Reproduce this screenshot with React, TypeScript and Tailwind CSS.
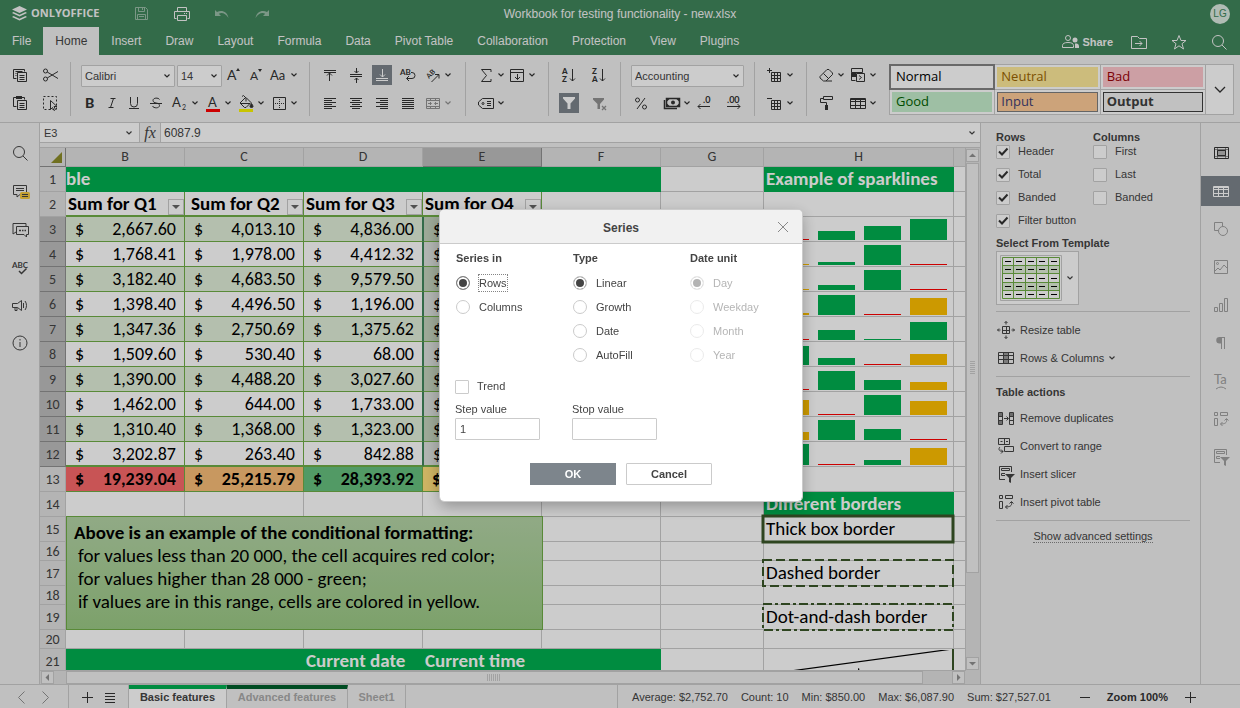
import { useState, type ReactNode } from "react";
import clsx from "clsx";

function Icon({ children, w = 20, h = 20, className }: { children: ReactNode; w?: number; h?: number; className?: string }) {
  return (
    <svg
      width={w}
      height={h}
      viewBox={`0 0 ${w} ${h}`}
      fill="none"
      stroke="currentColor"
      aria-hidden="true"
      className={clsx("shrink-0", className)}
    >
      {children}
    </svg>
  );
}

function Chevron({ className }: { className?: string }) {
  return (
    <Icon w={8} h={8} className={className}>
      <path d="M1.500 2.500 4 5l2.500-2.500" strokeWidth="1.200" />
    </Icon>
  );
}

const letter = "fill-current stroke-none [font-family:Lato,'Open_Sans',sans-serif]";

const icons = {
  copy: (
    <Icon>
      <path d="M6.500 13.500h-3v-9h11v2M5.500 6.500h7M5.500 8.500h1M5.500 10.500h1M7.500 7.500h9v9h-9zM9.500 10.500h5M9.500 12.500h5M9.500 14.500h5" />
    </Icon>
  ),
  cut: (
    <Icon>
      <circle cx="5.500" cy="6" r="2" />
      <circle cx="5.500" cy="14" r="2" />
      <path d="M7.200 7 18 13.500M7.200 13 18 6.500" />
    </Icon>
  ),
  paste: (
    <Icon>
      <path d="M6.500 13.500h-3v-9h11v2M7.500 7.500h9v9h-9zM9.500 10.500h5M9.500 12.500h5M9.500 14.500h5" />
      <path d="M6 3h6v3H6z" fill="currentColor" stroke="none" />
    </Icon>
  ),
  selectAll: (
    <Icon>
      <path d="M3.500 3.500h13v13h-13z" strokeDasharray="2 2" />
      <path d="M10.500 7.500v9l2-2 1.500 3 1.500-1-1.500-3h3z" fill="#f1f1f1" />
    </Icon>
  ),
  incFont: (
    <Icon>
      <text x="3" y="15" fontSize="14" className={letter}>A</text>
      <path d="m12 6 2-3 2 3z" fill="currentColor" stroke="none" />
    </Icon>
  ),
  decFont: (
    <Icon>
      <text x="4" y="15" fontSize="12" className={letter}>A</text>
      <path d="m12 4 2 3 2-3z" fill="currentColor" stroke="none" />
    </Icon>
  ),
  changeCase: (
    <Icon>
      <text x="1" y="15" fontSize="13" className={letter}>Aa</text>
    </Icon>
  ),
  bold: (
    <Icon>
      <text x="5" y="15" fontSize="14" fontWeight="900" className={letter}>B</text>
    </Icon>
  ),
  italic: (
    <Icon>
      <path d="M8.500 5.500h5M6.500 14.500h5M11.500 5.500l-3 9" />
    </Icon>
  ),
  underline: (
    <Icon>
      <path d="M6.500 4v6.500a3.500 3.500 0 0 0 7 0V4M5 15.500h10" />
    </Icon>
  ),
  strike: (
    <Icon>
      <path d="M13.500 6.500c-1-2-6.500-2-6.500 1 0 3.500 6.500 1.500 6.500 5 0 3-6 3-7 .5M4 10.500h12" />
    </Icon>
  ),
  subscript: (
    <Icon>
      <text x="2" y="14" fontSize="13" className={letter}>A</text>
      <text x="12" y="17" fontSize="7" className={letter}>2</text>
    </Icon>
  ),
  fontColor: (
    <Icon>
      <text x="5" y="14" fontSize="13" className={letter}>A</text>
      <path d="M3 16h14v3H3z" fill="#f00" stroke="none" />
    </Icon>
  ),
  fillColor: (
    <Icon>
      <path d="M9.500 4.500 4 10l4.500 4.500h1.500l5-5-5-5zM4.500 10.500h9.500M6 3.500l1.500-1 2.500 2.500v3.500" />
      <path d="M15.500 10.500q3 4 0 4t0-4z" fill="currentColor" />
      <path d="M3 16h14v3H3z" fill="#fbf500" stroke="none" />
    </Icon>
  ),
  borders: (
    <Icon>
      <path d="M4.500 4.500h12v12h-12z" />
      <path d="M10.500 6v10M6 10.500h10" strokeDasharray="1 1" />
    </Icon>
  ),
  alignTop: (
    <Icon>
      <path d="M4 5.500h12M4 7.500h12M9.500 16V8M7 10.500 9.500 8l2.500 2.500" />
    </Icon>
  ),
  alignMiddle: (
    <Icon>
      <path d="M4 9.500h12M4 11.500h12M10.500 3v5M8.500 6l2 2 2-2M10.500 18v-5M8.500 15l2-2 2 2" />
    </Icon>
  ),
  alignBottom: (
    <Icon>
      <path d="M4 13.500h12M4 15.500h12M10.500 4v8M8 9.500l2.500 2.500 2.500-2.500" />
    </Icon>
  ),
  wrap: (
    <Icon>
      <text x="2" y="10" fontSize="8" fontWeight="700" className={letter}>AB</text>
      <path d="M13 7.500h1a2.800 2.800 0 0 1 0 6H9M11 11l-2.500 2.500L11 16" />
    </Icon>
  ),
  orientation: (
    <Icon>
      <text x="6" y="14" fontSize="7" fontWeight="700" transform="rotate(-45 6 14)" className={letter}>AB</text>
      <path d="m8.500 17 7-7M12 9.500h4v4" />
    </Icon>
  ),
  left: <Icon><path d="M4 5.500h12M4 7.500h8M4 9.500h12M4 11.500h8M4 13.500h12M4 15.500h8" /></Icon>,
  center: <Icon><path d="M4 5.500h12M6 7.500h8M4 9.500h12M6 11.500h8M4 13.500h12M6 15.500h8" /></Icon>,
  right: <Icon><path d="M4 5.500h12M8 7.500h8M4 9.500h12M8 11.500h8M4 13.500h12M8 15.500h8" /></Icon>,
  justify: <Icon><path d="M4 5.500h12M4 7.500h12M4 9.500h12M4 11.500h12M4 13.500h12M4 15.500h12" /></Icon>,
  merge: (
    <Icon className="opacity-50">
      <path d="M3.500 5.500h13v10h-13zM3 7.500h14M3 13.500h14M7.500 5v3M12.500 5v3M7.500 13v3M12.500 13v3M5 10.500h3M12 10.500h3M7 9l1.500 1.500L7 12M13 9l-1.500 1.500L13 12" />
    </Icon>
  ),
  sum: <Icon><path d="M15 7V4.500H5.500l5 6-5 6H15V14" /></Icon>,
  fillDown: <Icon><path d="M3.500 4.500h13v12h-13zM3 7.500h14M10.500 9v5.500M8 12l2.500 2.500L13 12" /></Icon>,
  names: (
    <Icon>
      <path d="M6.500 5.500h11v10h-11L2.500 12V9zM11 8.500h4M11 10.500h4M11 12.500h4" />
      <circle cx="7" cy="10.500" r="1" />
    </Icon>
  ),
  sortAsc: (
    <Icon>
      <text x="3" y="9" fontSize="8" fontWeight="900" className={letter}>A</text>
      <text x="3" y="17" fontSize="8" fontWeight="900" className={letter}>Z</text>
      <path d="M13.500 4v12M11 13.500l2.500 2.500 2.500-2.500" />
    </Icon>
  ),
  sortDesc: (
    <Icon>
      <text x="3" y="9" fontSize="8" fontWeight="900" className={letter}>Z</text>
      <text x="3" y="17" fontSize="8" fontWeight="900" className={letter}>A</text>
      <path d="M13.500 4v12M11 13.500l2.500 2.500 2.500-2.500" />
    </Icon>
  ),
  filter: <Icon><path d="M4 4h12v1.500L11.500 10.500V16h-3v-5.500L4 5.500z" fill="currentColor" stroke="none" /></Icon>,
  clearFilter: (
    <Icon className="opacity-50">
      <path d="M4 5h11v1.500L11 11v5H8.500v-5L4 6.500z" fill="currentColor" stroke="none" />
      <path d="m13 13 4 4M17 13l-4 4" strokeWidth="1.300" />
    </Icon>
  ),
  percent: (
    <Icon>
      <circle cx="6.500" cy="7" r="2" />
      <circle cx="13.500" cy="14" r="2" />
      <path d="m14 5-8 11" />
    </Icon>
  ),
  money: (
    <Icon>
      <path d="M2.500 7v8.500H15" strokeWidth="1.500" />
      <path d="M4.500 5.500h13v8h-13z" strokeWidth="1.500" />
      <circle cx="11" cy="9.500" r="2" fill="currentColor" stroke="none" />
      <path d="M5 6h2.500L5 8.500zM17 6h-2.500L17 8.500zM5 13h2.500L5 10.500zM17 13h-2.500l2.500-2.500z" fill="currentColor" stroke="none" />
    </Icon>
  ),
  decDecimal: (
    <Icon>
      <text x="9" y="10" fontSize="9" fontWeight="700" className={letter}>.0</text>
      <path d="M16 13.500H4M6.500 11 4 13.500 6.500 16" />
    </Icon>
  ),
  incDecimal: (
    <Icon>
      <text x="3" y="10" fontSize="9" fontWeight="700" className={letter}>.00</text>
      <path d="M3 13.500h13M13.500 11l2.500 2.500-2.500 2.500" />
    </Icon>
  ),
  insertCell: (
    <Icon>
      <path d="M6.500 7.500h9v9h-9zM6 10.500h10M6 13.500h10M9.500 7v10M12.500 7v10" />
      <path d="M1.500 5.500h6M4.500 2.500v6" stroke="#f1f1f1" strokeWidth="3" />
      <path d="M2 5.500h5M4.500 3v5" />
    </Icon>
  ),
  deleteCell: (
    <Icon>
      <path d="M6.500 7.500h9v9h-9zM6 10.500h10M6 13.500h10M9.500 7v10M12.500 7v10" />
      <path d="M2 5.500h5" />
    </Icon>
  ),
  eraser: <Icon><path d="m4 11.500 7-7h2l3.500 3.500v1.500L10 16H7.500L4 13zM7.500 8.500 12.500 13.500M10 16h6" /></Icon>,
  condFormat: (
    <Icon>
      <path d="M3.500 3.500h11v4h-11zM3.500 7.500v8h4M3 11.500h5" />
      <path d="M4 8h4v3H4z" fill="currentColor" stroke="none" />
      <path d="M8.500 8.500h8v8h-8zM11 10.500l2.500 2-2.500 2" fill="#f1f1f1" />
    </Icon>
  ),
  painter: (
    <Icon>
      <path d="M6.500 3.500h9v3h-9zM6.500 5.500h-3v4h6v3" />
      <path d="M8 12h3v5H8z" fill="currentColor" stroke="none" />
    </Icon>
  ),
  table: <Icon><path d="M2.500 5.500h15v10h-15zM2 8.500h16M2 12.500h16M7.500 5v11M12.500 5v11M2 6.500h16" /></Icon>,
  search: (
    <Icon>
      <circle cx="9" cy="9" r="5.500" />
      <path d="m13 13 4.500 4.500" />
    </Icon>
  ),
  slicer: (
    <Icon>
      <path d="M9 15.500H3.500v-13h12V8M5.500 4.500h8v2h-8zM9 9.500H5.500v2H9" />
      <path d="M9 10h10l-4 4v5l-2-1v-4z" fill="currentColor" stroke="none" />
    </Icon>
  ),
  pivot: <Icon><path d="M3.500 3.500h3v3h-3zM9.500 3.500h7v3h-7zM3.500 9.500h3v7h-3zM15.500 10c1 4-2 5-6 5M13.500 11.500l2-2 2 2M11.500 13l-2 2 2 2" /></Icon>,
};

function IconButton({ icon, label, active, narrow, w22 }: { icon: ReactNode; label: string; active?: boolean; narrow?: boolean; w22?: boolean }) {
  return (
    <button
      type="button"
      aria-label={label}
      aria-pressed={active}
      className={clsx("flex h-7 items-center justify-center", w22 ? "w-[22px]" : narrow ? "w-[26px]" : "w-[30px]")}
    >
      <span className={clsx("flex h-5 w-5", active && "bg-[#7d858c] text-white")}>{icon}</span>
    </button>
  );
}

function MenuButton({ icon, label, disabled }: { icon: ReactNode; label: string; disabled?: boolean }) {
  return (
    <button type="button" aria-label={label} disabled={disabled} className="flex h-7 w-[31px] items-center gap-px pl-0.5">
      {icon}
      <Chevron className={disabled ? "opacity-50" : undefined} />
    </button>
  );
}

function Combo({ value, label, className }: { value: string; label: string; className: string }) {
  return (
    <div className={clsx("relative mt-0.5", className)}>
      <select
        aria-label={label}
        defaultValue={value}
        className="block h-[22px] w-full appearance-none rounded-[1px] border border-[#cbcbcb] bg-white pl-[3px] text-[11px] text-[#444]"
      >
        <option>{value}</option>
      </select>
      <Chevron className="pointer-events-none absolute top-[7px] right-1" />
    </div>
  );
}

function Group({ className, top, bottom }: { className?: string; top: ReactNode; bottom: ReactNode }) {
  return (
    <div className={clsx("flex h-[54px] shrink-0 flex-col border-r border-[#cbcbcb]", className)}>
      <div className="flex h-[26px] items-center">{top}</div>
      <div className="mt-0.5 flex h-[26px] items-center">{bottom}</div>
    </div>
  );
}

const menuTabs = ["File", "Home", "Insert", "Draw", "Layout", "Formula", "Data", "Pivot Table", "Collaboration", "Protection", "View", "Plugins"];

function Header() {
  return (
    <header className="relative h-[55px] shrink-0 bg-[#40865c] text-[#f4f4f4]">
      <div className="flex h-[27px] items-center pr-[10px] pl-3">
        <Icon w={15} h={16} className="mr-1">
          <path d="M7.500 0 15 3.500 7.500 7 0 3.500z" fill="currentColor" stroke="none" />
          <path d="M1.500 6 0 7l7.500 3.500L15 7l-1.500-1-6 2.800z" fill="currentColor" stroke="none" />
          <path d="M1.500 10 0 11l7.500 3.500L15 11l-1.500-1-6 2.800z" fill="currentColor" stroke="none" />
        </Icon>
        <span className="w-[68px] text-[11px] font-bold [font-family:'Open_Sans',sans-serif]">ONLYOFFICE</span>
        <div className="ml-[33px] flex gap-5">
          <button type="button" aria-label="Save" className="w-5 px-0.5 py-1 opacity-50">
            <Icon w={16} h={18}>
              <path d="M1.500 2.500h10l2 2v10h-12zM4.500 2.500v4h6v-4M8.500 3v2M3.500 14.500v-5h8v5M5 11.500h5" />
            </Icon>
          </button>
          <button type="button" aria-label="Print" className="w-5">
            <Icon>
              <path d="M5.500 7V3.500h9V7M4.500 14.500h-2v-7h15v7h-2M5.500 11.500h9v5h-9zM12 9.500h1M14 9.500h1" />
            </Icon>
          </button>
          <button type="button" aria-label="Undo" className="w-5 opacity-50">
            <Icon>
              <path d="M3 6v6h6L6.800 9.800C10 8 13.500 9.500 16.500 14 15.500 8 10 5.500 5 8z" fill="currentColor" stroke="none" />
            </Icon>
          </button>
          <button type="button" aria-label="Redo" className="w-5 opacity-50">
            <Icon>
              <path d="M17 6v6h-6l2.200-2.200C10 8 6.500 9.500 3.500 14 4.500 8 10 5.500 15 8z" fill="currentColor" stroke="none" />
            </Icon>
          </button>
        </div>
        <span className="flex-1" />
        <span className="grid h-5 w-5 place-items-center rounded-full bg-[#dcebe2] text-[10px] text-[#40865c]">LG</span>
      </div>
      <h1 className="pointer-events-none absolute inset-x-0 top-1.5 text-center text-[12px] leading-4">
        Workbook for testing functionality - new.xlsx
      </h1>
      <div className="flex h-7 items-stretch">
        <nav className="flex" aria-label="Ribbon tabs">
          {menuTabs.map((tab) => (
            <button
              key={tab}
              type="button"
              className={clsx("px-3 text-[12px] whitespace-nowrap", tab === "Home" && "bg-[#f1f1f1] text-[#444]")}
            >
              {tab}
            </button>
          ))}
        </nav>
        <div className="ml-auto flex items-center pt-0.5 pr-[11px]">
          <button type="button" className="flex items-center gap-0.5 text-[11px] font-bold">
            <Icon>
              <circle cx="8" cy="6" r="2.500" />
              <path d="M2.500 15.500v-2c0-2 2-3 5.500-3s5.500 1 5.500 3v2z" />
              <circle cx="15" cy="8" r="2.500" fill="currentColor" stroke="none" />
              <path d="M15 11.500h2q2 .5 2 2.500v2h-4z" fill="currentColor" stroke="none" />
            </Icon>
            Share
          </button>
          <button type="button" aria-label="Open file location" className="ml-4">
            <Icon>
              <path d="M2.500 4.500h6l2 2h7v10h-15zM6 11.500h7M10.500 9l2.500 2.500-2.500 2.500" />
            </Icon>
          </button>
          <button type="button" aria-label="Favorite" className="ml-5">
            <Icon>
              <path d="m10 3.500 2 5h5l-4 3.200 1.500 5.300-4.500-3.200L5.500 17 7 11.700 3 8.500h5z" />
            </Icon>
          </button>
          <button type="button" aria-label="Search" className="ml-5">{icons.search}</button>
        </div>
      </div>
    </header>
  );
}

const cellStyles = [
  { name: "Normal", text: "border-white text-black", selected: true },
  { name: "Neutral", text: "border-[#ffeb9c] bg-[#ffeb9c] text-[#9c6500]" },
  { name: "Bad", text: "border-[#ffc7ce] bg-[#ffc7ce] text-[#9c0006]" },
  { name: "Good", text: "border-[#c6efce] bg-[#c6efce] text-[#006100]" },
  { name: "Input", text: "border-[#7f7f7f] bg-[#ffcc99] text-[#3f3f76]" },
  { name: "Output", text: "border-[#3f3f3f] bg-[#f2f2f2] font-bold text-[#3f3f3f]" },
];

function Toolbar() {
  return (
    <div className="flex h-[68px] shrink-0 items-start overflow-hidden border-b border-[#cbcbcb] bg-[#f1f1f1] pt-[7px] pr-[6px] text-[#333]">
      <Group
        className="w-[71px] pl-[5px]"
        top={<><IconButton icon={icons.copy} label="Copy" /><IconButton icon={icons.cut} label="Cut" /></>}
        bottom={<><IconButton icon={icons.paste} label="Paste" /><IconButton icon={icons.selectAll} label="Select all" /></>}
      />
      <Group
        className="w-[239px] pl-2"
        top={
          <>
            <Combo value="Calibri" label="Font" className="mr-0.5 ml-0.5 w-[94px]" />
            <Combo value="14" label="Font size" className="mr-px w-[45px]" />
            <IconButton icon={icons.incFont} label="Increment font size" w22 />
            <IconButton icon={icons.decFont} label="Decrement font size" w22 />
            <MenuButton icon={icons.changeCase} label="Change case" />
          </>
        }
        bottom={
          <>
            <IconButton icon={icons.bold} label="Bold" w22 />
            <IconButton icon={icons.italic} label="Italic" w22 />
            <IconButton icon={icons.underline} label="Underline" w22 />
            <IconButton icon={icons.strike} label="Strikethrough" w22 />
            <div className="ml-px flex gap-0.5">
              <MenuButton icon={icons.subscript} label="Subscript" />
              <MenuButton icon={icons.fontColor} label="Font color" />
              <MenuButton icon={icons.fillColor} label="Fill color" />
              <MenuButton icon={icons.borders} label="Borders" />
            </div>
          </>
        }
      />
      <Group
        className="w-[156px] pl-[7px]"
        top={
          <>
            <IconButton icon={icons.alignTop} label="Align top" narrow />
            <IconButton icon={icons.alignMiddle} label="Align middle" narrow />
            <IconButton icon={icons.alignBottom} label="Align bottom" narrow active />
            <IconButton icon={icons.wrap} label="Wrap text" narrow />
            <MenuButton icon={icons.orientation} label="Orientation" />
          </>
        }
        bottom={
          <>
            <IconButton icon={icons.left} label="Align left" narrow />
            <IconButton icon={icons.center} label="Align center" narrow />
            <IconButton icon={icons.right} label="Align right" narrow />
            <IconButton icon={icons.justify} label="Justified" narrow />
            <MenuButton icon={icons.merge} label="Merge" disabled />
          </>
        }
      />
      <Group
        className="w-[83px] pl-2"
        top={<><MenuButton icon={icons.sum} label="Summation" /><MenuButton icon={icons.fillDown} label="Fill" /></>}
        bottom={<MenuButton icon={icons.names} label="Named ranges" />}
      />
      <Group
        className="w-[72px] pl-[5px]"
        top={
          <>
            <IconButton icon={icons.sortAsc} label="Sort ascending" />
            <IconButton icon={icons.sortDesc} label="Sort descending" />
          </>
        }
        bottom={
          <>
            <IconButton icon={icons.filter} label="Filter" active />
            <IconButton icon={icons.clearFilter} label="Clear filter" />
          </>
        }
      />
      <Group
        className="w-[134px] pl-[7px]"
        top={<Combo value="Accounting" label="Number format" className="ml-[3px] w-[113px]" />}
        bottom={
          <>
            <IconButton icon={icons.percent} label="Percent style" narrow />
            <span className="ml-1.5 flex"><MenuButton icon={icons.money} label="Accounting style" /></span>
            <IconButton icon={icons.decDecimal} label="Decrease decimal" narrow />
            <span className="ml-1 flex"><IconButton icon={icons.incDecimal} label="Increase decimal" narrow /></span>
          </>
        }
      />
      <Group
        className="w-[52px] pl-2"
        top={<MenuButton icon={icons.insertCell} label="Insert cells" />}
        bottom={<MenuButton icon={icons.deleteCell} label="Delete cells" />}
      />
      <div className="flex h-[54px] w-[82px] shrink-0 flex-col pl-[7px]">
        <div className="flex h-[26px] items-center gap-px">
          <MenuButton icon={icons.eraser} label="Clear" />
          <MenuButton icon={icons.condFormat} label="Conditional formatting" />
        </div>
        <div className="mt-0.5 flex h-[26px] items-center gap-px">
          <span className="flex w-[31px]"><IconButton icon={icons.painter} label="Copy style" narrow /></span>
          <MenuButton icon={icons.table} label="Format as table" />
        </div>
      </div>
      <div className="mt-0.5 flex h-[51px] min-w-0 flex-1 border border-[#cbcbcb] bg-white">
        <div className="grid min-w-0 flex-1 grid-cols-3 gap-px bg-[#cbcbcb]">
          {cellStyles.map((style) => (
            <button
              key={style.name}
              type="button"
              className={clsx("flex bg-white p-[2px]", style.selected && "outline-2 -outline-offset-1 outline-[#848484]")}
            >
              <span
                className={clsx(
                  "flex h-5 w-full items-center border pl-[3px] text-[13px] [font-family:'Open_Sans',sans-serif]",
                  style.text,
                )}
              >
                {style.name}
              </span>
            </button>
          ))}
        </div>
        <button type="button" aria-label="More styles" className="grid w-7 place-items-center border-l border-[#cbcbcb]">
          <Icon w={14} h={10}>
            <path d="m2 2 5 5 5-5" strokeWidth="1.300" />
          </Icon>
        </button>
      </div>
    </div>
  );
}

function LeftBar() {
  return (
    <aside className="flex w-10 shrink-0 flex-col items-center gap-[18px] border-r border-[#cbcbcb] bg-[#f1f1f1] pt-5 text-[#444]">
      <button type="button" aria-label="Search">{icons.search}</button>
      <button type="button" aria-label="Comments">
        <Icon>
          <path d="M3.500 4.500h13v9H10l-3 2.500v-2.500H3.500zM6 7.500h8M6 9.500h8" />
          <rect x="10" y="11" width="10" height="7" rx="1.500" fill="#f5c940" stroke="none" />
          <path d="M12 13.500h6M12 15.500h6" />
        </Icon>
      </button>
      <button type="button" aria-label="Chat">
        <Icon>
          <path d="M6 13l-3 2V4.500h13V7M6.500 7.500h12v8h-2V18L14 15.500H6.500z" />
          <path d="M9 11.500h2M12 11.500h1.500M14.500 11.500H16" strokeWidth="1.500" />
        </Icon>
      </button>
      <button type="button" aria-label="Spell checking">
        <Icon>
          <text x="2" y="11" fontSize="8" fontWeight="700" className={letter}>ABC</text>
          <path d="m9 14 2.500 2.500 5-5" strokeWidth="1.500" />
        </Icon>
      </button>
      <button type="button" aria-label="Feedback">
        <Icon>
          <path d="M2.500 8.500h5l4-3v10l-4-3h-5zM5 12.500v3h2v-3M13.500 8v5M15 6c2 2.500 2 6.500 0 9" />
        </Icon>
      </button>
      <button type="button" aria-label="About">
        <Icon>
          <circle cx="10" cy="10" r="7" />
          <path d="M10 9v5M10 6v1.500" />
        </Icon>
      </button>
    </aside>
  );
}

const quarters = [
  ["2,667.60", "4,013.10", "4,836.00"],
  ["1,768.41", "1,978.00", "4,412.32"],
  ["3,182.40", "4,683.50", "9,579.50"],
  ["1,398.40", "4,496.50", "1,196.00"],
  ["1,347.36", "2,750.69", "1,375.62"],
  ["1,509.60", "530.40", "68.00"],
  ["1,390.00", "4,488.20", "3,027.60"],
  ["1,462.00", "644.00", "1,733.00"],
  ["1,310.40", "1,368.00", "1,323.00"],
  ["3,202.87", "263.40", "842.88"],
];

const sparkColors = { g: "#00b050", y: "#ffc000", r: "#ff0000" };

const sparklines: [keyof typeof sparkColors, number][][] = [
  [["r", 1], ["g", 9], ["g", 14], ["g", 21]],
  [["y", 1], ["g", 3], ["g", 20], ["r", 1]],
  [["y", 1], ["g", 5], ["g", 20], ["r", 1]],
  [["y", 2], ["g", 20], ["r", 1], ["y", 17]],
  [["r", 1], ["g", 10], ["g", 1], ["g", 18]],
  [["g", 19], ["g", 7], ["r", 1], ["y", 11]],
  [["r", 1], ["g", 19], ["g", 10], ["y", 8]],
  [["y", 15], ["r", 1], ["g", 20], ["y", 14]],
  [["y", 8], ["g", 20], ["g", 11], ["r", 1]],
  [["g", 21], ["r", 1], ["g", 5], ["y", 17]],
];

const GRID = "border-r border-b border-[#cbcbcb]";
const TABLE = "border-r border-b border-[#70ad47]";
const GREEN = "border-b border-[#00b050] bg-[#00b050] font-bold text-white";

function RowHead({ n, short }: { n: number; short?: boolean }) {
  const selected = n >= 3 && n <= 12;
  return (
    <th
      scope="row"
      className={clsx(
        "border-r border-b text-[14px] font-normal text-[#444]",
        selected ? "border-[#909090] bg-[#bfbfbf]" : "border-[#cbcbcb] bg-[#e2e2e2]",
      )}
    >
      <div className={clsx("flex items-center justify-center pt-0.5 leading-4", short ? "h-[18px]" : "h-6")}>{n}</div>
    </th>
  );
}

function Cell({ children, className, thick, short }: { children?: ReactNode; className?: string; thick?: boolean; short?: boolean }) {
  return (
    <td className={clsx("p-0", className ?? GRID, thick && "border-b-2")}>
      <div className={clsx("flex items-center overflow-hidden leading-6 whitespace-nowrap", short ? "h-[18px]" : thick ? "h-[23px]" : "h-6")}>
        {children}
      </div>
    </td>
  );
}

function Money({ value }: { value?: string }) {
  return (
    <div className="flex w-full justify-between pr-2 pl-[9px] text-[18px]">
      <span>$</span>
      <span>{value}</span>
    </div>
  );
}

function QuarterHead({ children, className }: { children: ReactNode; className?: string }) {
  return (
    <Cell thick className={clsx(TABLE, "font-bold")}>
      <span className={clsx("flex-1", className ?? "pl-0.5")}>{children}</span>
      <button type="button" aria-label="Filter" className="mt-1.5 grid h-4 w-4 shrink-0 place-items-center border border-[#cbcbcb] bg-white text-[#666]">
        <svg width="8" height="4" viewBox="0 0 8 4" aria-hidden="true"><path d="M0 0h8L4 4z" fill="currentColor" /></svg>
      </button>
    </Cell>
  );
}

function BorderedCell({ children, dash }: { children: ReactNode; dash?: string }) {
  return (
    <td className={clsx("relative p-0", GRID)}>
      <div className="flex h-6 items-center pl-0.5 leading-6 whitespace-nowrap">{children}</div>
      {/* the frame sits on the grid lines, so it reaches out of the cell */}
      <svg className="absolute -top-0.5 -left-0.5 h-[28px] w-[193px] overflow-visible" fill="none" stroke="#3a5728" aria-hidden="true">
        <rect x="1" y="1" width="190" height="26" strokeWidth={dash ? 2 : 3} strokeDasharray={dash} />
      </svg>
    </td>
  );
}

function Sheet() {
  return (
    <div className="relative min-h-0 flex-1 overflow-hidden bg-white">
      <table className="w-full table-fixed border-separate border-spacing-0 text-[19px] text-black [font-family:Carlito,Lato,sans-serif]">
        <colgroup>
          <col className="w-[26px]" />
          <col className="w-[119px]" />
          <col className="w-[119px]" />
          <col className="w-[119px]" />
          <col className="w-[119px]" />
          <col className="w-[119px]" />
          <col className="w-[103px]" />
          <col className="w-[190px]" />
          <col />
        </colgroup>
        <thead>
          <tr className="text-[14px] leading-none text-[#444]">
            <td className="border-r border-b border-[#909090] bg-[#e2e2e2] p-0">
              <svg width="11" height="11" viewBox="0 0 11 11" className="mr-[3px] ml-auto" aria-hidden="true">
                <path d="M11 0v11H0z" fill="#8c8c28" />
              </svg>
            </td>
            {["B", "C", "D", "E", "F", "G", "H", ""].map((name) => (
              <th
                key={name}
                scope="col"
                className={clsx(
                  "border-r border-b p-0 font-normal",
                  name === "E" ? "border-[#909090] bg-[#bfbfbf]" : "border-[#cbcbcb] bg-[#e2e2e2]",
                )}
              >
                <div className="flex h-[18px] items-center justify-center">{name}</div>
              </th>
            ))}
          </tr>
        </thead>
        <tbody>
          <tr>
            <RowHead n={1} />
            <Cell className={GREEN}>ble</Cell>
            {[0, 1, 2, 3].map((i) => <Cell key={i} className={GREEN} />)}
            <Cell />
            <Cell className={GREEN}><span className="pl-0.5">Example of sparklines</span></Cell>
            <Cell />
          </tr>
          <tr>
            <RowHead n={2} />
            <QuarterHead>Sum for Q1</QuarterHead>
            <QuarterHead className="pl-1.5">Sum for Q2</QuarterHead>
            <QuarterHead>Sum for Q3</QuarterHead>
            <QuarterHead>Sum for Q4</QuarterHead>
            <Cell /><Cell /><Cell /><Cell />
          </tr>
          {quarters.map((row, i) => {
            const banded = i % 2 === 0;
            const thick = i === quarters.length - 1;
            return (
              <tr key={i}>
                <RowHead n={i + 3} />
                {row.map((value, q) => (
                  <Cell key={q} thick={thick} className={clsx(TABLE, banded && "bg-[#e2efda]", q === 2 && "border-r-[#40865c]")}>
                    <Money value={value} />
                  </Cell>
                ))}
                <Cell thick={thick} className={clsx(TABLE, "border-l border-l-[#40865c]", banded ? "bg-[#c4d3bd]" : "bg-[#dde2de]")}>
                  <Money />
                </Cell>
                <Cell /><Cell />
                <Cell>
                  <div className="flex h-full items-end gap-[9px] pb-px pl-2">
                    {sparklines[i].map(([color, height], b) => (
                      <span key={b} className="w-[37px]" style={{ height, background: sparkColors[color] }} />
                    ))}
                  </div>
                </Cell>
                <Cell />
              </tr>
            );
          })}
          <tr className="font-bold">
            <RowHead n={13} />
            <Cell className={clsx(TABLE, "bg-[#fa6a6b]")}><Money value="19,239.04" /></Cell>
            <Cell className={clsx(TABLE, "bg-[#fabe78]")}><Money value="25,215.79" /></Cell>
            <Cell className={clsx(TABLE, "bg-[#67c17f]")}><Money value="28,393.92" /></Cell>
            <Cell className={clsx(TABLE, "bg-[#ffe07c]")}><Money /></Cell>
            <Cell /><Cell /><Cell /><Cell />
          </tr>
          <tr>
            <RowHead n={14} />
            <Cell /><Cell /><Cell /><Cell /><Cell /><Cell />
            <Cell className={GREEN}><span className="pl-0.5">Different borders</span></Cell>
            <Cell />
          </tr>
          <tr>
            <RowHead n={15} />
            <Cell /><Cell /><Cell /><Cell /><Cell /><Cell />
            <BorderedCell>Thick box border</BorderedCell>
            <Cell />
          </tr>
          <tr><RowHead n={16} short />{[0, 1, 2, 3, 4, 5, 6, 7].map((i) => <Cell key={i} short />)}</tr>
          <tr>
            <RowHead n={17} />
            <Cell /><Cell /><Cell /><Cell /><Cell /><Cell />
            <BorderedCell dash="9 4">Dashed border</BorderedCell>
            <Cell />
          </tr>
          <tr><RowHead n={18} short />{[0, 1, 2, 3, 4, 5, 6, 7].map((i) => <Cell key={i} short />)}</tr>
          <tr>
            <RowHead n={19} />
            <Cell /><Cell /><Cell /><Cell /><Cell /><Cell />
            <BorderedCell dash="9 3 3 3">Dot-and-dash border</BorderedCell>
            <Cell />
          </tr>
          <tr><RowHead n={20} short />{[0, 1, 2, 3, 4, 5, 6, 7].map((i) => <Cell key={i} short />)}</tr>
          <tr>
            <RowHead n={21} />
            <Cell className={GREEN} /><Cell className={GREEN} />
            <Cell className={GREEN}><span className="pl-0.5">Current date</span></Cell>
            <Cell className={GREEN}><span className="pl-0.5">Current time</span></Cell>
            <Cell className={GREEN} /><Cell />
            <Cell className="border-r-2 border-[#3a5728]">
              <svg width="189" height="24" viewBox="0 0 189 24" fill="none" stroke="#000" aria-hidden="true">
                <path d="M189-1 5 24M95 18.500l1 5.500" strokeWidth="1.200" />
              </svg>
            </Cell>
            <Cell />
          </tr>
        </tbody>
      </table>
      {/* text box floating over rows 15-19 */}
      <div className="absolute top-[368px] left-[26px] h-[114px] w-[477px] border border-[#70ad47] bg-linear-to-b from-[#b5d5a7] to-[#9cca86] pt-1 pl-[7px] text-[19px] leading-[23px] whitespace-nowrap text-black [font-family:Carlito,Lato,sans-serif]">
        <p className="font-bold">Above is an example of the conditional formatting:</p>
        <p className="pl-1">for values less than 20 000, the cell acquires red color;</p>
        <p className="pl-1">for values higher than 28 000 - green;</p>
        <p className="pl-1">if values are in this range, cells are colored in yellow.</p>
      </div>
    </div>
  );
}

function ScrollArrow({ d, label, className }: { d: string; label: string; className?: string }) {
  return (
    <button
      type="button"
      aria-label={label}
      className={clsx("grid h-[13px] w-[13px] shrink-0 place-items-center border border-[#cbcbcb] bg-[#f1f1f1] text-[#909090]", className)}
    >
      <svg width="7" height="7" viewBox="0 0 7 7" aria-hidden="true"><path d={d} fill="currentColor" /></svg>
    </button>
  );
}

function Workspace() {
  return (
    <main className="flex min-w-0 flex-1 flex-col bg-[#f1f1f1]">
      <div className="flex h-5 shrink-0 border-b border-[#cbcbcb] bg-white text-[12px] text-[#444]">
        <div className="relative w-[100px] border-r border-[#cbcbcb]">
          <input aria-label="Cell name" defaultValue="E3" className="block h-full w-full bg-transparent pl-1 text-[11px]" />
          <Chevron className="absolute top-1.5 right-1.5" />
        </div>
        <button
          type="button"
          aria-label="Insert function"
          className="w-[21px] border-r border-[#cbcbcb] bg-[#f1f1f1] text-[16px] leading-none italic [font-family:'Liberation_Serif',serif]"
        >
          fx
        </button>
        <input aria-label="Formula" defaultValue="6087.9" className="min-w-0 flex-1 bg-transparent pl-[3px]" />
        <Chevron className="mt-1.5 mr-1" />
      </div>
      <div className="mt-1 flex min-h-0 flex-1 border-t border-[#cbcbcb]">
        <div className="flex min-w-0 flex-1 flex-col">
          <Sheet />
          <div className="flex h-[14px] shrink-0 items-center border-t border-[#cbcbcb] bg-[#e2e2e2] pl-px">
            <ScrollArrow d="M5 0v7L1.500 3.500z" label="Scroll left" />
            <div className="ml-3 flex h-[13px] flex-1 items-center justify-center border border-[#cbcbcb] bg-[#f1f1f1] text-[#cbcbcb]">
              <Icon w={15} h={7}><path d="M.5 0v7M2.500 0v7M4.500 0v7M6.500 0v7M8.500 0v7M10.500 0v7M12.500 0v7" /></Icon>
            </div>
            <ScrollArrow d="M2 0v7l3.500-3.500z" label="Scroll right" className="mr-px ml-[29px]" />
          </div>
        </div>
        <div className="flex w-[14px] shrink-0 flex-col bg-[#e2e2e2] pt-px pb-[14px]">
          <ScrollArrow d="M0 5h7L3.500 1.500z" label="Scroll up" />
          <div className="mt-px flex h-[410px] w-[13px] items-center justify-center border border-[#cbcbcb] bg-[#f1f1f1] text-[#cbcbcb]">
            <Icon w={5} h={15}><path d="M0 .5h5M0 2.500h5M0 4.500h5M0 6.500h5M0 8.500h5M0 10.500h5M0 12.500h5" /></Icon>
          </div>
          <ScrollArrow d="M0 2h7L3.500 5.500z" label="Scroll down" className="mt-auto" />
        </div>
      </div>
    </main>
  );
}

function Checkbox({ label, defaultChecked }: { label: string; defaultChecked?: boolean }) {
  return (
    <label className="flex h-[23px] items-center gap-2">
      <span className="relative h-[14px] w-[14px] shrink-0">
        <input
          type="checkbox"
          defaultChecked={defaultChecked}
          className="peer block h-[14px] w-[14px] appearance-none rounded-[1px] border border-[#cbcbcb] bg-white"
        />
        <svg
          width="14"
          height="14"
          viewBox="0 0 14 14"
          fill="none"
          stroke="#333"
          strokeWidth="2"
          className="pointer-events-none invisible absolute inset-0 peer-checked:visible"
          aria-hidden="true"
        >
          <path d="m3 6.500 3 3 5.500-6" />
        </svg>
      </span>
      {label}
    </label>
  );
}

function TablePreview() {
  return (
    <svg width="62" height="46" viewBox="0 0 62 46" fill="none" aria-hidden="true">
      <path d="M.5.5h61v45H.5z" fill="#fff" stroke="#cbcbcb" />
      <path d="M2 10h58v8H2zM2 27h58v8H2z" fill="#e2efda" />
      <path d="M2.500 2.500h57v41h-57zM2 10.500h58M2 18.500h58M2 27.500h58M2 35.500h58M13.500 2v42M25.500 2v42M36.500 2v42M48.500 2v42" stroke="#70ad47" />
      {[6.5, 14.5, 23.5, 31.5, 39.5].map((y) => (
        <path key={y} d={`M5 ${y}h6M16 ${y}h6M28 ${y}h6M39 ${y}h6M51 ${y}h6`} stroke="#000" />
      ))}
    </svg>
  );
}

const panelActions = [
  {
    label: "Remove duplicates",
    icon: (
      <Icon>
        <path d="M2.500 4.500h4v12h-4zM2.500 8.500h4M2.500 12.500h4M13.500 4.500h4v12h-4zM13.500 8.500h4M13.500 12.500h4M8 10.500h4M10.500 8.500l2 2-2 2" />
        <path d="M3 5h3v3H3zM3 13h3v3H3zM14 5h3v3h-3z" fill="currentColor" fillOpacity=".6" stroke="none" />
      </Icon>
    ),
  },
  {
    label: "Convert to range",
    icon: (
      <Icon>
        <path d="M2.500 2.500h11v6h-11zM8.500 2.500v6M4.500 5.500h2M10 5.500h2M8.500 10.500h9v5h-9zM4 11C2 13 3 15.500 7 15.500M5 13.500l2 2-2 2" />
      </Icon>
    ),
  },
  { label: "Insert slicer", icon: icons.slicer },
  { label: "Insert pivot table", icon: icons.pivot },
];

function RightPanel() {
  return (
    <section
      aria-label="Table settings"
      className="w-[220px] shrink-0 border-l border-[#cbcbcb] bg-[#f1f1f1] pt-2 pr-[10px] pl-[15px] text-[11px] text-[#444]"
    >
      <div className="flex">
        <div className="w-[97px]">
          <h2 className="h-[9px] leading-[13px] font-bold">Rows</h2>
          <Checkbox label="Header" defaultChecked />
          <Checkbox label="Total" defaultChecked />
          <Checkbox label="Banded" defaultChecked />
          <Checkbox label="Filter button" defaultChecked />
        </div>
        <div>
          <h2 className="h-[9px] leading-[13px] font-bold">Columns</h2>
          <Checkbox label="First" />
          <Checkbox label="Last" />
          <Checkbox label="Banded" />
        </div>
      </div>
      <h2 className="mt-1 leading-[15px] font-bold">Select From Template</h2>
      <button type="button" aria-label="Table template" className="flex h-[54px] w-[83px] items-center gap-1 border border-[#cbcbcb] bg-white pl-[3px]">
        <TablePreview />
        <Chevron />
      </button>
      <div className="mt-[6px] border-t border-[#cbcbcb] pt-1">
        <button type="button" className="flex h-7 items-center gap-1">
          <Icon>
            <path d="M6.500 6.500h7v7h-7zM10.500 6v8M6 10.500h8M10 1.500v3M10 15.500v3M1.500 10h3M15.500 10h3M8.500 3 10 1.500 11.500 3M8.500 17l1.500 1.500 1.500-1.500M3 8.500 1.500 10 3 11.500M17 8.500l1.500 1.500-1.500 1.500" />
          </Icon>
          Resize table
        </button>
        <button type="button" className="flex h-7 items-center gap-1">
          <Icon>
            <path d="M7 4h5v12H7z" fill="currentColor" fillOpacity=".5" stroke="none" />
            <path d="M2.500 4.500h15v11h-15zM2 7.500h16M2 11.500h16M7.500 4v12M12.500 4v12" />
          </Icon>
          Rows &amp; Columns
          <Chevron />
        </button>
      </div>
      <div className="mt-1 border-t border-[#cbcbcb] pt-[7px]">
        <h2 className="leading-4 font-bold">Table actions</h2>
        <div className="mt-1">
          {panelActions.map((action) => (
            <button key={action.label} type="button" className="flex h-7 items-center gap-1">
              {action.icon}
              {action.label}
            </button>
          ))}
        </div>
      </div>
      <div className="mt-1 border-t border-[#cbcbcb] pt-[7px] text-center">
        <a href="#advanced" className="border-b border-dotted border-[#888]">Show advanced settings</a>
      </div>
    </section>
  );
}

const sideTabs = [
  {
    label: "Cell settings",
    enabled: true,
    icon: (
      <Icon>
        <path d="M3 6.500h15M3 13.500h15M6.500 4v12M14.500 4v12" strokeOpacity=".5" />
        <path d="M3.500 4.500h14v11h-14z" />
        <path d="M6.500 7.500h8v5h-8z" fill="currentColor" fillOpacity=".3" />
      </Icon>
    ),
  },
  { label: "Table settings", icon: icons.table, active: true },
  { label: "Shape settings", icon: <Icon><path d="M7 11.500H3.500v-8h8V7" /><circle cx="12" cy="12" r="4.500" /></Icon> },
  { label: "Image settings", icon: <Icon><path d="M3.500 3.500h13v13h-13zM4 14l3-3 2 2 4-5 3.500 3.500" /><circle cx="6.500" cy="6.500" r="1" /></Icon> },
  { label: "Chart settings", icon: <Icon><path d="M3.500 12.500h3v4h-3zM8.500 8.500h3v8h-3zM13.500 3.500h3v13h-3z" /></Icon> },
  {
    label: "Paragraph settings",
    icon: (
      <Icon>
        <path d="M14 4.500H9.500M10.500 4v12M13.500 4v12" />
        <path d="M10 4v6.500H8.500a3.200 3.200 0 0 1 0-6.500z" fill="currentColor" stroke="none" />
      </Icon>
    ),
  },
  { label: "Text Art settings", icon: <Icon><text x="3" y="13" fontSize="13" className={letter}>Ta</text><path d="M5 18q5-4 10 0" /></Icon> },
  { label: "Pivot settings", icon: icons.pivot },
  { label: "Slicer settings", icon: icons.slicer },
];

function SideTabs() {
  return (
    <nav aria-label="Settings" className="flex w-10 shrink-0 flex-col gap-2 border-l border-[#cbcbcb] bg-[#f1f1f1] pt-[15px]">
      {sideTabs.map((tab) => (
        <button
          key={tab.label}
          type="button"
          aria-label={tab.label}
          className={clsx(
            "flex h-[30px] items-center justify-center",
            tab.active ? "bg-[#7d858c] text-white" : tab.enabled ? "text-[#333]" : "text-[#a0a0a0]",
          )}
        >
          {tab.icon}
        </button>
      ))}
    </nav>
  );
}

function StatusBar() {
  return (
    <footer className="flex h-6 shrink-0 items-stretch border-t border-[#cbcbcb] bg-[#f1f1f1] text-[11px] whitespace-nowrap text-[#444]">
      <div className="flex w-[69px] items-center justify-end gap-[3px] border-r border-[#cbcbcb] pr-[13px] text-[#909090]">
        <button type="button" aria-label="Previous sheet"><Icon><path d="m12.500 4.500-6 6 6 6" /></Icon></button>
        <button type="button" aria-label="Next sheet"><Icon><path d="m7.500 4.500 6 6-6 6" /></Icon></button>
      </div>
      <div className="flex w-[60px] items-center gap-[3px] border-r border-[#cbcbcb] pl-2 text-[#333]">
        <button type="button" aria-label="Add sheet"><Icon><path d="M10.500 5v11M5 10.500h11" /></Icon></button>
        <button type="button" aria-label="List of sheets"><Icon><path d="M5 6.500h10M5 9.500h10M5 12.500h10M5 15.500h10" /></Icon></button>
      </div>
      <button type="button" className="w-[98px] border-t-4 border-r border-t-[#00b050] border-r-[#cbcbcb] bg-white pb-0.5 font-bold">
        Basic features
      </button>
      <button type="button" className="w-[121px] border-t-4 border-r border-t-[#005f2b] border-r-[#cbcbcb] pb-0.5 font-bold text-[#aaa]">
        Advanced features
      </button>
      <button type="button" className="w-[58px] border-r border-[#cbcbcb] pt-0.5 font-bold text-[#aaa]">Sheet1</button>
      <div className="flex-1 border-r border-[#cbcbcb]" />
      <div className="flex items-center gap-[13px] pt-px pl-[14px]">
        <span>Average: $2,752.70</span>
        <span>Count: 10</span>
        <span>Min: $850.00</span>
        <span>Max: $6,087.90</span>
        <span>Sum: $27,527.01</span>
      </div>
      <div className="flex items-center gap-3 pt-px pr-10 pl-6 text-[#333]">
        <button type="button" aria-label="Zoom out"><Icon><path d="M5 10.500h10" /></Icon></button>
        <span className="font-bold">Zoom 100%</span>
        <button type="button" aria-label="Zoom in"><Icon><path d="M10.500 5v11M5 10.500h11" /></Icon></button>
      </div>
    </footer>
  );
}

function RadioGroup({ title, name, options, disabled, focused }: { title: string; name: string; options: string[]; disabled?: boolean; focused?: string }) {
  const [value, setValue] = useState(options[0]);
  return (
    <fieldset disabled={disabled} className="w-[117px] shrink-0">
      <legend className="mb-[5px] pl-px leading-4 font-bold">{title}</legend>
      {options.map((option) => (
        <label key={option} className={clsx("flex h-6 items-center gap-[9px] pl-px", disabled && "opacity-40")}>
          <input
            type="radio"
            name={name}
            checked={value === option}
            onChange={() => setValue(option)}
            className={clsx(
              "h-[14px] w-[14px] shrink-0 appearance-none rounded-full border bg-white checked:bg-[#444] checked:shadow-[inset_0_0_0_2px_#fff]",
              focused === option ? "border-[#848484]" : "border-[#cbcbcb]",
            )}
          />
          <span className={clsx(focused === option && "outline-1 outline-[#848484] outline-dotted")}>{option}</span>
        </label>
      ))}
    </fieldset>
  );
}

function SeriesDialog() {
  return (
    <div className="fixed inset-0 flex items-center justify-center bg-black/20 pt-[3px] pl-0.5">
      <div
        role="dialog"
        aria-labelledby="series-title"
        className="w-[362px] rounded-[4px] bg-white text-[11px] text-[#444] shadow-[0_5px_15px_rgba(0,0,0,0.3)] outline-1 outline-[#cbcbcb]"
      >
        <div className="relative flex h-[34px] items-center justify-center rounded-t-[4px] border-b border-[#cbcbcb] bg-[#f1f1f1] pt-0.5">
          <h2 id="series-title" className="text-[12px] font-bold">Series</h2>
          <button type="button" aria-label="Close" className="absolute top-[7px] right-[9px] text-[#888]">
            <Icon><path d="m5 5 10 10M15 5 5 15" /></Icon>
          </button>
        </div>
        <form className="px-[15px] pt-[6px] pb-4" onSubmit={(event) => event.preventDefault()}>
          <div className="flex">
            <RadioGroup title="Series in" name="series-in" options={["Rows", "Columns"]} focused="Rows" />
            <RadioGroup title="Type" name="type" options={["Linear", "Growth", "Date", "AutoFill"]} />
            <RadioGroup title="Date unit" name="unit" options={["Day", "Weekday", "Month", "Year"]} disabled />
          </div>
          <div className="mt-2">
            <Checkbox label="Trend" />
          </div>
          <div className="mt-[3px] flex">
            <label className="w-[117px] leading-4">
              Step value
              <input defaultValue="1" className="mt-px block h-[22px] w-[85px] rounded-[1px] border border-[#cbcbcb] px-1" />
            </label>
            <label className="w-[117px] leading-4">
              Stop value
              <input className="mt-px block h-[22px] w-[85px] rounded-[1px] border border-[#cbcbcb] px-1" />
            </label>
          </div>
          <div className="mt-[23px] flex justify-center gap-[10px]">
            <button type="submit" className="h-[22px] w-[86px] bg-[#7d858c] font-bold text-white">OK</button>
            <button type="button" className="h-[22px] w-[86px] rounded-[1px] border border-[#cbcbcb] bg-white font-bold">Cancel</button>
          </div>
        </form>
      </div>
    </div>
  );
}

export default function App() {
  return (
    <div className="flex h-screen flex-col overflow-hidden bg-[#f1f1f1] [font-family:'Liberation_Sans',Arial,sans-serif]">
      <Header />
      <Toolbar />
      <div className="flex min-h-0 flex-1">
        <LeftBar />
        <Workspace />
        <RightPanel />
        <SideTabs />
      </div>
      <StatusBar />
      <SeriesDialog />
    </div>
  );
}
